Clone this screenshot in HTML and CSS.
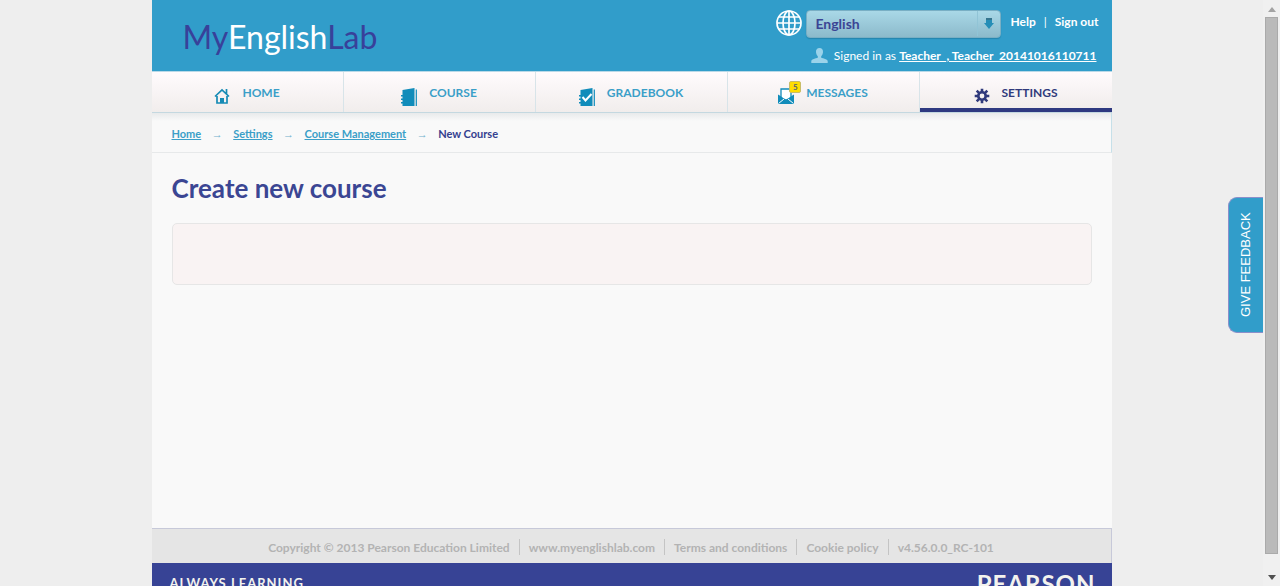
FILE: index.html
```html
<!DOCTYPE html>
<html lang="en">
<head>
<meta charset="utf-8">
<title>MyEnglishLab - Create new course</title>
<meta name="viewport" content="width=device-width, initial-scale=1">
<link rel="stylesheet" href="styles.css">
</head>
<body>
<div class="viewport">
  <div class="page">
    <header class="header">
      <a class="logo" href="#"><span class="logo-dark">My</span>English<span class="logo-dark">Lab</span></a>
      <div class="account">
        <div class="account-row">
          <svg class="globe" viewBox="0 0 26 26" fill="none" stroke="#fff" stroke-width="1.7" aria-hidden="true">
            <circle cx="13" cy="13" r="12"/><ellipse cx="13" cy="13" rx="6" ry="12"/>
            <path d="M13 1v24M1 13h24M3 7h20M3 19h20"/>
          </svg>
          <div class="language">
            <select class="language-select" aria-label="Language"><option>English</option></select>
            <svg class="language-arrow" viewBox="0 0 10 11" aria-hidden="true"><path d="M2 0h6v5h2L5 11 0 5h2z" fill="#258eb7"/><path d="M2 0h6v2H2z" fill="#34758f"/></svg>
          </div>
          <nav class="links" aria-label="Account">
            <a href="#">Help</a><span class="bar">|</span><a href="#">Sign out</a>
          </nav>
        </div>
        <div class="signed">
          <svg class="person" viewBox="0 0 17 15" fill="#9bd3ea" aria-hidden="true"><path d="M8.500 0C11 0 12.200 1.700 12 4.200c-.2 2-1 3.200-1.800 4v1.500c2 .8 6 1.300 6.500 3.300V15H.3v-2c.5-2 4.500-2.500 6.500-3.300V8.200C6 7.400 5.200 6.200 5 4.200 4.800 1.700 6 0 8.500 0z"/></svg>
          <span>Signed in as <a href="#">Teacher_, Teacher_20141016110711</a></span>
        </div>
      </div>
    </header>

    <nav class="tabs" aria-label="Main">
      <a class="tab" href="#">
        <svg class="icon" viewBox="0 0 16 16" aria-hidden="true"><path d="M1 8.500 8 2l7 6.500M3 8v7h10V8M12.500 1v5" fill="none" stroke="#168bb5" stroke-width="1.700"/><path d="M6 10h4v5H6z" fill="#168bb5"/></svg>
        <span>HOME</span>
      </a>
      <a class="tab" href="#">
        <svg class="icon icon-book" viewBox="0 0 16 18" aria-hidden="true"><path d="M1.500 2 13.500 0v18h-12v-2.500H0V14h1.500v-2H0v-1.500h1.500v-2H0V7h1.500z" fill="#118cba"/><path d="M15.300 1.500V18" stroke="#118cba" stroke-width="1.200"/></svg>
        <span>COURSE</span>
      </a>
      <a class="tab" href="#">
        <svg class="icon icon-book" viewBox="0 0 16 18" aria-hidden="true"><path d="M1.500 2 13.500 0v18h-12v-2.500H0V14h1.500v-2H0v-1.500h1.500v-2H0V7h1.500z" fill="#118cba"/><path d="M15.300 1.500V18" stroke="#118cba" stroke-width="1.200"/><path d="m3.500 9 3 3.500L12.500 6" fill="none" stroke="#fff" stroke-width="2"/></svg>
        <span>GRADEBOOK</span>
      </a>
      <a class="tab" href="#">
        <span class="mail">
          <svg class="icon" viewBox="0 0 16 16" aria-hidden="true"><path d="M3 10V1h10v9l-5 2z" fill="#fff" stroke="#118cba" stroke-width="1.300"/><path d="M0 6.500 2.500 8 8 12l5.500-4L16 6.500V16H0z" fill="#118cba"/><path d="M.5 15.500 6 11M15.500 15.500 10 11" stroke="#fff"/></svg>
          <span class="badge">5</span>
        </span>
        <span>MESSAGES</span>
      </a>
      <a class="tab tab-active" href="#" aria-current="page">
        <svg class="icon" viewBox="0 0 16 16" fill="none" stroke="#303a7c" aria-hidden="true"><circle cx="8" cy="8" r="3.700" stroke-width="2.600"/><path d="M8 4V.7M8 12v3.300M4 8H.7M12 8h3.300M5.200 5.200 2.700 2.700M10.800 10.800l2.500 2.500M5.200 10.800l-2.500 2.500M10.800 5.200l2.500-2.500" stroke-width="2.600"/></svg>
        <span>SETTINGS</span>
      </a>
    </nav>

    <nav class="crumbs" aria-label="Breadcrumb">
      <a href="#">Home</a><span class="arrow">→</span>
      <a href="#">Settings</a><span class="arrow">→</span>
      <a href="#">Course Management</a><span class="arrow">→</span>
      <span class="current">New Course</span>
    </nav>

    <main class="content">
      <h1 class="title">Create new course</h1>
      <section class="panel"></section>
    </main>

    <footer>
      <div class="legal">
        <span class="legal-item">Copyright © 2013 Pearson Education Limited</span>
        <a class="legal-item" href="#">www.myenglishlab.com</a>
        <a class="legal-item" href="#">Terms and conditions</a>
        <a class="legal-item" href="#">Cookie policy</a>
        <span class="legal-item">v4.56.0.0_RC-101</span>
      </div>
      <div class="brand"><span class="slogan">ALWAYS LEARNING</span><span class="pearson">PEARSON</span></div>
    </footer>
  </div>
  <button class="feedback" type="button">GIVE FEEDBACK</button>
</div>
<div class="scrollbar" aria-hidden="true">
  <svg class="scroll-arrow" viewBox="0 0 8 5"><path d="M4 0 8 5H0z" fill="#a3a3a3"/></svg>
  <div class="thumb"></div>
  <svg class="scroll-arrow" viewBox="0 0 8 5"><path d="M0 0h8L4 5z" fill="#505050"/></svg>
</div>
</body>
</html>
```
FILE: styles.css
```css
* { box-sizing: border-box; }
body {
  display: flex;
  height: 100vh;
  margin: 0;
  overflow: hidden;
  background: #eee;
  color: #34408f;
  font: bold 12px/16px Lato, "Open Sans", sans-serif;
}
.viewport { flex: 1; position: relative; overflow: hidden; }
.page { max-width: 960px; margin: 0 auto; background: #f9f9f9; }

.header {
  display: flex;
  justify-content: space-between;
  height: 71px;
  padding: 0 13px 0 31px;
  background: #319dca;
  color: #fff;
}
.header a { color: #fff; }
.logo { padding-top: 16px; font-size: 32px; font-weight: 400; line-height: 42px; text-decoration: none; }
.logo-dark { color: #38419a; }
.account { padding-top: 10px; }
.account-row { display: flex; }
.globe { width: 26px; height: 26px; margin-right: 4px; }
.language { position: relative; width: 195px; height: 28px; }
.language-select {
  appearance: none;
  width: 100%;
  height: 28px;
  padding: 0 8px;
  border: 1px solid #79afc4;
  border-radius: 4px;
  background: linear-gradient(#a9d8e7, #8cbacb);
  box-shadow: 0 1px 1px #2585ad;
  color: #3b4494;
  font: bold 14px/20px Lato, "Open Sans", sans-serif;
}
.language-arrow { position: absolute; top: 8px; right: 7px; width: 10px; height: 11px; pointer-events: none; }
.language::after { content: ""; position: absolute; top: 1px; right: 23px; height: 25px; border-left: 1px solid #91c4d6; }
.links { display: flex; padding: 4px 0 0 9px; }
.links a { text-decoration: none; }
.bar { padding: 0 8px; font-weight: 400; }
.signed { display: flex; justify-content: flex-end; gap: 6px; padding: 10px 2px 0 0; font-weight: 400; }
.signed a { font-weight: bold; }
.person { width: 17px; height: 15px; }

.tabs { display: grid; grid-template-columns: repeat(5, 1fr); border-top: 1px solid #b9d9e8; border-bottom: 1px solid #c4d8e0; }
.tab {
  display: flex;
  justify-content: center;
  gap: 12px;
  height: 40px;
  padding-top: 12px;
  border-right: 1px solid #d8e4e9;
  background: linear-gradient(#fffbfd, #f1edec);
  color: #3b9fc8;
  line-height: 18px;
  text-decoration: none;
}
.tab-active { border-right: 0; border-bottom: 4px solid #2e3980; color: #303a7c; }
.icon { display: block; width: 16px; height: 16px; margin-top: 4px; }
.icon-book { height: 18px; }
.mail { position: relative; }
.badge {
  position: absolute;
  top: -3px;
  left: 11px;
  width: 12px;
  border: 1px solid #c9bd68;
  border-radius: 2px;
  background: #fd0;
  color: #5a6170;
  font-size: 8px;
  line-height: 10px;
  text-align: center;
}

.crumbs {
  display: flex;
  flex-wrap: wrap;
  min-height: 40px;
  padding: 13px 20px 10px;
  border-right: 1px solid #c6e0e9;
  border-bottom: 1px solid #e7e9ea;
  background: linear-gradient(#e8eaeb, #f9f9f9 8px);
  font-size: 11px;
}
.crumbs a { color: #3b9fc8; }
.arrow { width: 32px; color: #6fb0cd; font-family: "Liberation Sans", sans-serif; font-weight: 400; text-align: center; }

.content { min-height: 375px; padding: 17px 20px; }
.title { margin: 0 0 17px; color: #3b4693; font-size: 26px; line-height: 36px; }
.panel { min-height: 62px; border: 1px solid #e6e6e6; border-radius: 5px; background: #f9f3f3; }

.legal {
  display: flex;
  justify-content: center;
  height: 35px;
  padding-top: 10px;
  border: 1px solid #c7c9d9;
  border-width: 1px 1px 0 0;
  background: #e5e5e5;
}
.legal-item { height: 16px; padding: 0 9px; color: #b3b3b3; line-height: 18px; text-decoration: none; }
.legal-item + .legal-item { border-left: 1px solid #c4c4c4; }
.brand { display: flex; justify-content: space-between; height: 60px; padding: 8px 16px 0 18px; background: #374395; color: #f3f3ee; }
.slogan { padding-top: 3px; letter-spacing: 1px; font-size: 13px; line-height: 18px; }
.pearson { letter-spacing: 1px; font-size: 24px; line-height: 26px; }

.feedback {
  position: absolute;
  top: 197px;
  right: 0;
  width: 35px;
  height: 136px;
  padding: 0;
  border: 1px solid #8b8fca;
  border-left: 0;
  border-radius: 0 9px 9px 0;
  background: #319dca;
  color: #fff;
  font: 13px/20px "Liberation Sans", Arial, sans-serif;
  writing-mode: vertical-rl;
  transform: rotate(180deg);
}
.scrollbar { display: flex; flex-direction: column; align-items: center; gap: 5px; width: 17px; padding: 7px 0 6px; background: #f0f0f0; }
.scroll-arrow { width: 8px; height: 5px; }
.thumb { width: 13px; height: 537px; margin-bottom: auto; background: #bababa; border: 1px solid #aaa; }
```
